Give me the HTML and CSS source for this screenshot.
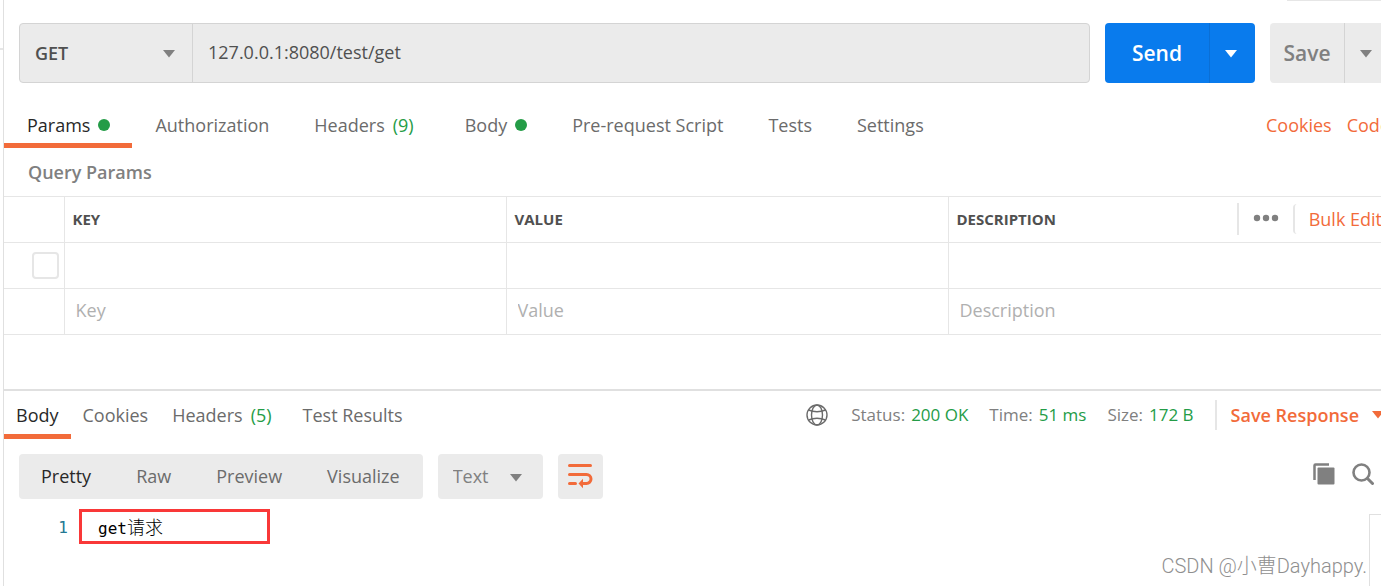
FILE: index.html
```html
<!DOCTYPE html>
<html lang="en">
<head>
<meta charset="utf-8">
<title>Request builder</title>
<link rel="stylesheet" href="styles.css">
</head>
<body>
<div class="app">
  <aside class="rail"><div class="rail-item"></div></aside>
  <main class="workspace">
    <div class="top-edge"></div>
    <form class="request-bar">
      <div class="url-group">
        <div class="select-wrap method">
          <select class="select method-select" aria-label="Method"><option>GET</option><option>POST</option></select>
          <svg class="caret over" viewBox="0 0 12 8"><path d="M0 0H12L6 7.5Z"/></svg>
        </div>
        <input class="url-input" type="text" aria-label="Request URL" value="127.0.0.1:8080/test/get">
      </div>
      <div class="split send">
        <button type="button" class="split-main">Send</button>
        <button type="button" class="split-more" aria-label="Send options"><svg class="caret" viewBox="0 0 12 8"><path d="M0 0H12L6 7.5Z"/></svg></button>
      </div>
      <div class="split save">
        <button type="button" class="split-main">Save</button>
        <button type="button" class="split-more" aria-label="Save options"><svg class="caret" viewBox="0 0 12 8"><path d="M0 0H12L6 7.5Z"/></svg></button>
      </div>
    </form>

    <nav class="tabs request-tabs">
      <button class="tab active">Params<span class="dot"></span></button>
      <button class="tab">Authorization</button>
      <button class="tab">Headers<span class="count">(9)</span></button>
      <button class="tab">Body<span class="dot"></span></button>
      <button class="tab">Pre-request Script</button>
      <button class="tab">Tests</button>
      <button class="tab">Settings</button>
      <div class="tab-links"><a href="#cookies">Cookies</a><a href="#code">Code</a></div>
    </nav>

    <h2 class="section-title">Query Params</h2>
    <table class="params">
      <colgroup><col class="col-check"><col class="col-field"><col class="col-field"><col></colgroup>
      <thead>
        <tr>
          <th></th><th>KEY</th><th>VALUE</th>
          <th>
            <div class="head-cell">
              <span>DESCRIPTION</span>
              <button class="more" aria-label="More"><svg viewBox="0 0 26 8"><circle cx="4" cy="4" r="3.2"/><circle cx="13" cy="4" r="3.2"/><circle cx="22" cy="4" r="3.2"/></svg></button>
              <button class="bulk">Bulk Edit</button>
            </div>
          </th>
        </tr>
      </thead>
      <tbody>
        <tr><td class="check-cell"><input class="check" type="checkbox" aria-label="Enable row"></td><td></td><td></td><td></td></tr>
        <tr>
          <td></td>
          <td><input class="cell-input" aria-label="Key" placeholder="Key"></td>
          <td><input class="cell-input" aria-label="Value" placeholder="Value"></td>
          <td><input class="cell-input" aria-label="Description" placeholder="Description"></td>
        </tr>
      </tbody>
    </table>

    <section class="response">
      <div class="tabs response-tabs">
        <button class="tab active">Body</button>
        <button class="tab">Cookies</button>
        <button class="tab">Headers<span class="count">(5)</span></button>
        <button class="tab">Test Results</button>
        <div class="status">
          <svg class="globe" viewBox="0 0 22 22"><circle cx="11" cy="11" r="10"/><ellipse cx="11" cy="11" rx="5.5" ry="10"/><path d="M2.5 6Q11 9.5 19.500 6M2.500 16Q11 12.500 19.500 16"/></svg>
          <span class="stat">Status:<b>200 OK</b></span>
          <span class="stat">Time:<b>51 ms</b></span>
          <span class="stat">Size:<b>172 B</b></span>
          <button class="save-response">Save Response<svg class="caret" viewBox="0 0 12 8"><path d="M0 0H12L6 7.5Z"/></svg></button>
        </div>
      </div>

      <div class="view-bar">
        <div class="view-group">
          <button class="view active">Pretty</button>
          <button class="view">Raw</button>
          <button class="view">Preview</button>
          <button class="view">Visualize</button>
        </div>
        <div class="select-wrap format">
          <select class="select format-select" aria-label="Format"><option>Text</option><option>JSON</option></select>
          <svg class="caret over" viewBox="0 0 12 8"><path d="M0 0H12L6 7.5Z"/></svg>
        </div>
        <button class="wrap" aria-label="Wrap lines">
          <svg viewBox="0 0 26 26"><path class="line" d="M2.500 2.500H23.500M2.500 11.500H19.500A4.500 4.500 0 0 1 19.500 20.500H16M2.500 20.500H8.500"/><path class="head" d="M11.500 20.500L16 15.800V25.200Z"/></svg>
        </button>
        <div class="view-tools">
          <button class="tool" aria-label="Copy"><svg viewBox="0 0 22 22"><path d="M1.500 17V2.500Q1.500 1.500 2.500 1.500H16" fill="none" stroke="#808080" stroke-width="2.500"/><rect x="4.500" y="4.500" width="17" height="17" rx="1" fill="#808080"/></svg></button>
          <button class="tool" aria-label="Search"><svg viewBox="0 0 22 22"><circle cx="9.500" cy="9.500" r="8" fill="none" stroke="#808080" stroke-width="2.600"/><path d="M15.500 15.500L20.500 20.500" stroke="#808080" stroke-width="3" stroke-linecap="round"/></svg></button>
        </div>
      </div>

      <div class="editor">
        <span class="line-number">1</span>
        <code class="code-line">get<span class="cjk" lang="zh-CN">请求</span></code>
        <div class="minimap"></div>
      </div>
    </section>
    <div class="watermark" lang="zh-CN">CSDN @小曹Dayhappy.</div>
  </main>
</div>
</body>
</html>
```
FILE: styles.css
```css
* { box-sizing: border-box; }

body {
  margin: 0;
  background: #fff;
  color: #6b6b6b;
  font: 18px/24px "Open Sans", "Noto Sans CJK SC", sans-serif;
}

button, input, select {
  margin: 0;
  padding: 0;
  border: 0;
  border-radius: 0;
  background: none;
  color: inherit;
  font: inherit;
}

svg { display: block; }

.app { display: flex; min-height: 100vh; overflow: hidden; }

.rail { flex: none; width: 4px; padding-top: 48px; border-right: 1px solid #e0e0e0; }
.rail-item { height: 2px; background: #e6e6e6; }

.workspace { position: relative; flex: 1; min-width: 0; display: flex; flex-direction: column; }
.top-edge { width: 94px; height: 1px; margin-left: auto; background: #e6e6e6; }

.caret { width: 12px; height: 8px; fill: currentColor; }

/* Request line */
.request-bar { display: flex; gap: 15px; height: 82px; padding: 22px 0 0 15px; }
.url-group {
  flex: 1;
  display: flex;
  min-width: 0;
  border: 1px solid #d4d4d4;
  border-radius: 4px;
  background: #ebebeb;
}
.select-wrap { position: relative; flex: none; display: flex; }
.select { width: 100%; appearance: none; outline: 0; }
.over { position: absolute; top: 50%; right: 17px; margin-top: -3px; color: #808080; pointer-events: none; }
.method { width: 173px; border-right: 1px solid #d4d4d4; }
.method-select { padding-left: 15px; color: #505050; font-weight: 600; }
.url-input { flex: 1; min-width: 0; padding: 0 15px 2px; color: #505050; }

.split { flex: none; display: flex; font-size: 21px; font-weight: 600; }
.split-more { display: flex; align-items: center; justify-content: center; padding-top: 2px; border-left: 1px solid; }
.send { width: 150px; border-radius: 4px; background: #097bed; color: #fff; }
.send .split-main { flex: 1; }
.send .split-more { width: 46px; border-color: #0a6fd6; padding-right: 4px; }
.save { width: 111px; border-radius: 4px 0 0 4px; background: #ebebeb; color: #808080; }
.save .split-main { flex: 1; }
.save .split-more { width: 37px; border-color: #d4d4d4; padding-left: 5px; }

/* Tabs */
.tabs { display: flex; }
.tab {
  display: flex;
  align-items: center;
  flex: none;
  border-bottom: 5px solid transparent;
  white-space: nowrap;
}
.tab.active { color: #282828; border-color: #f26b3a; }
.dot { width: 12px; height: 12px; margin-left: 8px; border-radius: 50%; background: #249c47; }
.count { margin: 0 7px 0 8px; color: #249c47; }
.request-tabs { height: 65px; }
.request-tabs .tab { padding: 23px 22px 0 23px; }
.request-tabs .count { margin-right: 6px; }
.tab-links { display: flex; align-items: center; gap: 15px; margin: 23px -9px 0 auto; padding-bottom: 5px; }
.tab-links a { color: #f26b3a; text-decoration: none; }

.section-title { margin: 0; padding: 12px 24px; color: #808080; font-size: 18px; font-weight: 600; }

/* Parameter table */
.params { width: 100%; border-collapse: collapse; table-layout: fixed; }
.params tr { height: 46px; border-top: 1px solid #e6e6e6; border-bottom: 1px solid #e6e6e6; }
.params th, .params td { padding: 0 8px 2px; text-align: left; }
.params th + th, .params td + td { border-left: 1px solid #e6e6e6; }
.params th { color: #505050; font-size: 15px; font-weight: 700; }
.col-check { width: 60px; }
.col-field { width: 442px; }
.head-cell { display: flex; align-items: center; height: 32px; margin-right: -9px; }
.more { display: flex; align-items: center; width: 56px; height: 32px; margin-left: auto; padding: 0 0 2px 14px; border-left: 2px solid #e6e6e6; }
.more svg { width: 26px; height: 8px; fill: #808080; }
.bulk { height: 30px; padding-left: 14px; border-left: 2px solid #e6e6e6; border-radius: 4px; color: #f26b3a; font-size: 18px; font-weight: 400; white-space: nowrap; }
.params .check-cell { padding: 0 5px 0 28px; }
.check { display: block; appearance: none; width: 27px; height: 27px; border: 2px solid #e6e6e6; border-radius: 4px; }
.cell-input { display: block; width: 100%; padding: 0 3px 2px; outline: 0; }
.cell-input::placeholder { color: #b0b0b0; opacity: 1; }

/* Response */
.response { flex: 1; display: flex; flex-direction: column; margin-top: 54px; border-top: 2px solid #e0e0e0; }
.response-tabs { height: 48px; }
.response-tabs .tab { padding: 12px 12px 7px; }
.status { display: flex; align-items: center; margin-left: auto; margin-right: -3px; font-size: 17px; white-space: nowrap; }
.globe { width: 22px; height: 22px; margin-right: 23px; fill: none; stroke: #6b6b6b; stroke-width: 1.4; }
.stat { margin-right: 21px; color: #808080; }
.stat b { margin-left: 6px; color: #249c47; font-weight: 400; }
.save-response { display: flex; align-items: center; gap: 13px; height: 30px; padding-left: 14px; border-left: 2px solid #e6e6e6; color: #f26b3a; font-size: 18px; font-weight: 600; }

.view-bar { display: flex; gap: 15px; height: 60px; padding: 15px 7px 0 15px; }
.view-group { display: flex; border-radius: 4px; background: #ebebeb; }
.view { padding: 0 23px 2px 22px; }
.view.active { color: #282828; }
.format { width: 105px; border-radius: 4px; background: #ebebeb; color: #808080; }
.format-select { padding: 0 0 2px 15px; }
.format .over { right: 21px; }
.wrap { display: flex; align-items: center; justify-content: center; width: 45px; padding-bottom: 2px; border-radius: 4px; background: #ebebeb; }
.wrap svg { width: 26px; height: 26px; }
.wrap .line { fill: none; stroke: #f26b3a; stroke-width: 3; stroke-linecap: round; }
.wrap .head { fill: #f26b3a; }
.view-tools { display: flex; align-items: center; gap: 17px; margin-left: auto; padding-bottom: 5px; }
.tool svg { width: 22px; height: 22px; }

.editor { flex: 1; display: flex; align-items: flex-start; min-height: 87px; font: 16px/27px "DejaVu Sans Mono", "Noto Sans CJK SC", monospace; }
.line-number { width: 64px; margin-top: 15px; color: #237893; text-align: right; }
.code-line { width: 191px; height: 35px; margin: 10px 0 0 11px; padding: 2px 0 0 16px; border: 3px solid #f93838; color: #000; font: inherit; }
.cjk { font-size: 18px; font-weight: 300; }
.minimap { align-self: stretch; width: 12px; margin: 15px 0 0 auto; border: solid #e0e0e0; border-width: 1px 0 0 1px; }

.watermark {
  position: absolute;
  right: 14px;
  bottom: 8px;
  color: #8f8f8f;
  font: 300 20px/24px Roboto, "Noto Sans CJK SC", sans-serif;
}
```
